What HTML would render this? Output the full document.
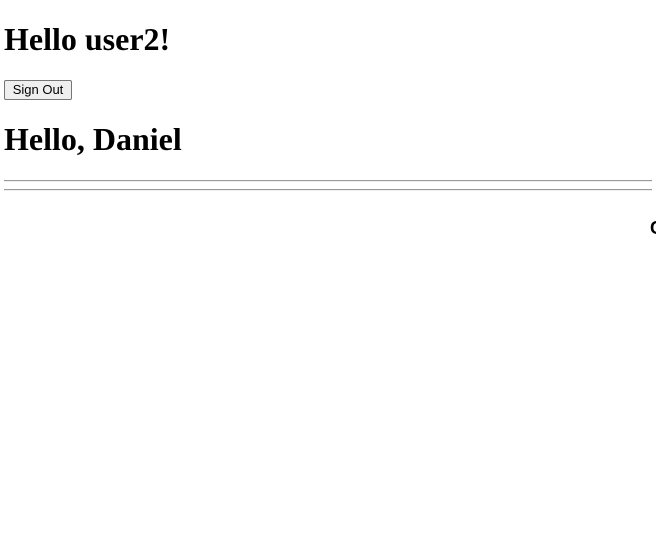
<!DOCTYPE html>
<html><head><style>
body{margin:0;width:656px;height:545px;overflow:hidden;background:#fff;position:relative;font-family:"Liberation Serif",serif;}
h1{position:absolute;left:4px;margin:0;font-size:32px;font-weight:bold;line-height:37px;color:#000;}
button{position:absolute;left:4px;top:80px;height:20px;width:68px;padding:0;font-family:"Liberation Sans",sans-serif;font-size:13px;line-height:18px;background:#efefef;border:1px solid #767676;border-radius:2px;color:#000;}
.hr{position:absolute;left:4px;width:648px;height:0;border-top:1px solid #9a9a9a;border-bottom:1px solid #eee;}
.c{position:absolute;left:650px;top:218px;font-size:18px;font-weight:bold;font-family:"Liberation Sans",sans-serif;}
</style></head><body>
<h1 style="top:21px">Hello user2!</h1>
<button>Sign Out</button>
<h1 style="top:121px">Hello, Daniel</h1>
<div class="hr" style="top:180px"></div>
<div class="hr" style="top:189px"></div>
<div class="c">C</div>
</body></html>
